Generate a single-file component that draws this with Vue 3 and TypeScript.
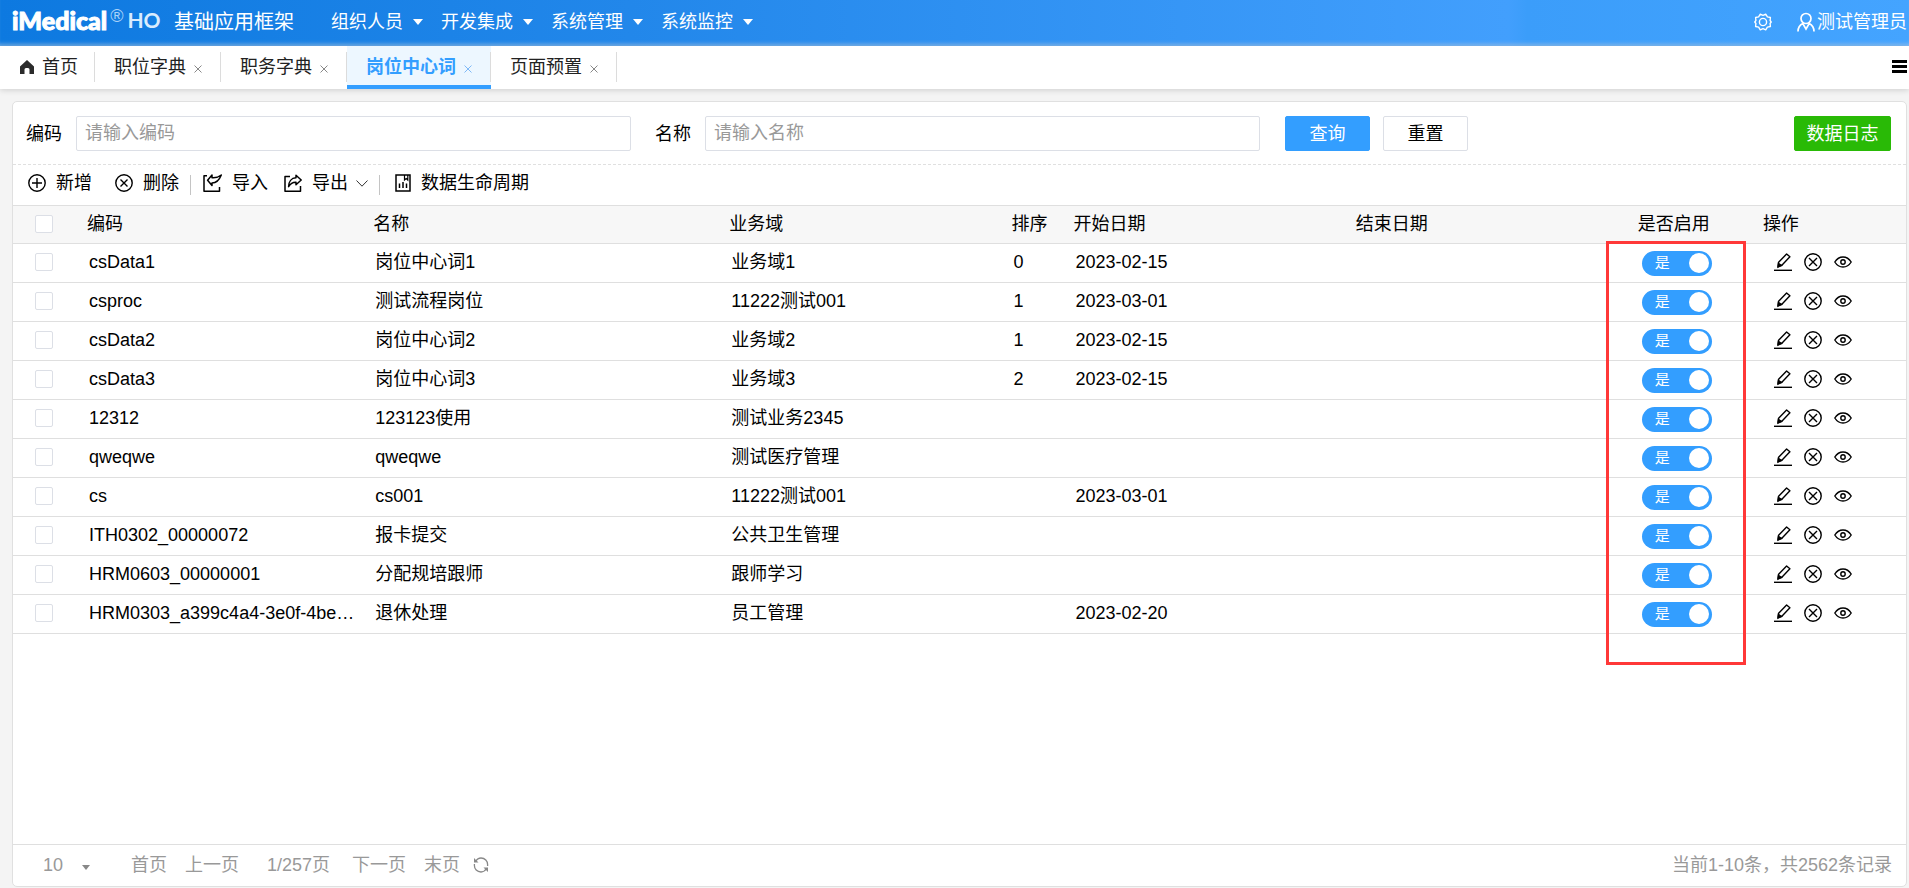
<script setup lang="ts">
import { ref } from 'vue'

interface Row {
  code: string
  name: string
  domain: string
  sort: string
  start: string
  end: string
  enabled: boolean
}

const menus: string[] = ['组织人员', '开发集成', '系统管理', '系统监控']
const tabs: string[] = ['职位字典', '职务字典', '岗位中心词', '页面预置']
const activeTab = ref('岗位中心词')
const codeQuery = ref('')
const nameQuery = ref('')

const row = (code: string, name: string, domain: string, sort = '', start = ''): Row => ({
  code, name, domain, sort, start, end: '', enabled: true,
})

const rows = ref<Row[]>([
  row('csData1', '岗位中心词1', '业务域1', '0', '2023-02-15'),
  row('csproc', '测试流程岗位', '11222测试001', '1', '2023-03-01'),
  row('csData2', '岗位中心词2', '业务域2', '1', '2023-02-15'),
  row('csData3', '岗位中心词3', '业务域3', '2', '2023-02-15'),
  row('12312', '123123使用', '测试业务2345'),
  row('qweqwe', 'qweqwe', '测试医疗管理'),
  row('cs', 'cs001', '11222测试001', '', '2023-03-01'),
  row('ITH0302_00000072', '报卡提交', '公共卫生管理'),
  row('HRM0603_00000001', '分配规培跟师', '跟师学习'),
  row('HRM0303_a399c4a4-3e0f-4be…', '退休处理', '员工管理', '', '2023-02-20'),
])
</script>

<template>
  <div class="page">
    <header class="topbar">
      <div class="logo">
        <span class="logo-name">iMedical</span><span class="logo-reg">®</span><span class="logo-ho">HO</span>
      </div>
      <h1 class="product">基础应用框架</h1>
      <nav class="menus">
        <button v-for="m in menus" :key="m" type="button" class="menu">
          {{ m }}
          <svg width="10" height="6" viewBox="0 0 10 6"><path d="M0 0h10L5 6z" fill="#fff" /></svg>
        </button>
      </nav>
      <div class="account">
        <button type="button" class="plain" aria-label="设置">
          <svg width="18" height="18" viewBox="0 0 18 18" fill="none" stroke="#fff" stroke-width="1.4" stroke-linejoin="round">
            <path d="M6.300 1.200 9 2.400l2.700-1.200 1.700 2.700 3 .6-.3 3L17.200 9l-1.100 1.500.3 3-3 .6-1.700 2.700L9 15.600l-2.700 1.200-1.700-2.700-3-.6.3-3L.8 9l1.100-1.500-.3-3 3-.6z" />
            <circle cx="9" cy="9" r="3.600" />
          </svg>
        </button>
        <button type="button" class="plain user">
          <svg width="18" height="20" viewBox="0 0 18 20" fill="none" stroke="#fff" stroke-width="1.700">
            <circle cx="9" cy="6.500" r="5" />
            <path d="M1 19.500c0-4 1.800-6.500 4.800-8l3.200 5.500 3.200-5.500c3 1.500 4.800 4 4.800 8" />
          </svg>
          测试管理员
        </button>
      </div>
    </header>

    <nav class="tabbar">
      <button type="button" class="tab home">
        <svg width="14" height="14" viewBox="0 0 14 14"><path d="M7 0 14 6.500V14H9.500V9.500a1.500 1.500 0 0 0-1.500-1.500H6A1.500 1.500 0 0 0 4.500 9.500V14H0V6.500z" fill="#2b2b2b" /></svg>
        首页
      </button>
      <button
        v-for="t in tabs" :key="t" type="button" class="tab"
        :class="{ active: t === activeTab }" @click="activeTab = t"
      >
        {{ t }}
        <svg class="close" width="8" height="8" viewBox="0 0 8 8"><path d="M.5.5l7 7m0-7l-7 7" fill="none" stroke="currentColor" /></svg>
      </button>
      <button type="button" class="plain more" aria-label="更多">
        <svg width="15" height="13" viewBox="0 0 15 13"><path d="M0 0h15v3H0zM0 5h15v3H0zM0 10h15v3H0z" fill="#000" /></svg>
      </button>
    </nav>

    <main class="panel">
      <form class="search" @submit.prevent>
        <label for="code">编码</label>
        <input id="code" v-model="codeQuery" type="text" placeholder="请输入编码">
        <label for="name" class="second">名称</label>
        <input id="name" v-model="nameQuery" type="text" placeholder="请输入名称">
        <button type="submit" class="btn primary">查询</button>
        <button type="reset" class="btn">重置</button>
        <button type="button" class="btn log">数据日志</button>
      </form>

      <div class="toolbar">
        <button type="button" class="tool">
          <svg width="18" height="18" viewBox="0 0 18 18" fill="none" stroke="#000" stroke-width="1.400"><circle cx="9" cy="9" r="8.200" /><path d="M9 4v10M4 9h10" /></svg>
          新增
        </button>
        <button type="button" class="tool del">
          <svg width="18" height="18" viewBox="0 0 18 18" fill="none" stroke="#000" stroke-width="1.400"><circle cx="9" cy="9" r="8.200" /><path d="M5.500 5.500l7 7m0-7l-7 7" /></svg>
          删除
        </button>
        <i class="sep"></i>
        <button type="button" class="tool">
          <svg width="19" height="18" viewBox="0 0 19 18" fill="none" stroke="#000" stroke-width="1.500" stroke-linejoin="round"><path d="M4 1.700H1v15.500h15.500V13" /><path d="M9 1 4.600 6.300 9 11.500V9c4.500 0 7.500-3.500 9.300-8C15.500 3.200 12.500 4 9 3.700z" /></svg>
          导入
        </button>
        <button type="button" class="tool export">
          <svg width="18" height="18" viewBox="0 0 18 18" fill="none" stroke="#000" stroke-width="1.500" stroke-linejoin="round"><path d="M6 2.500H1v14.700h15.500V12" /><path d="M12 1.200 17.200 6 12 10.800V8.200C8.500 8 6.500 9.500 4.600 12.700 4.600 7.500 7.500 4 12 3.800z" /></svg>
          导出
          <svg class="chev" width="12" height="7" viewBox="0 0 12 7"><path d="M.5.5 6 6.200 11.500.5" fill="none" stroke="#333" /></svg>
        </button>
        <i class="sep"></i>
        <button type="button" class="tool life">
          <svg width="16" height="18" viewBox="0 0 16 18" fill="none" stroke="#000" stroke-width="1.500"><path d="M1 1h14v16H1zM4.500 9.500V14M8 8v6M11.500 9.500V14" /><path d="M9.500 1v5L11.200 4.500 12.800 6V1" stroke-width="1.200" /></svg>
          数据生命周期
        </button>
      </div>

      <div class="grid">
        <table>
          <colgroup>
            <col class="c-check"><col class="c-code"><col class="c-name"><col class="c-mid"><col class="c-sort">
            <col class="c-mid"><col class="c-mid"><col class="c-on"><col class="c-op">
          </colgroup>
          <thead>
            <tr>
              <th class="check"><input type="checkbox" aria-label="全选"></th>
              <th>编码</th><th>名称</th><th>业务域</th><th>排序</th><th>开始日期</th><th>结束日期</th><th>是否启用</th><th>操作</th>
            </tr>
          </thead>
          <tbody>
            <tr v-for="r in rows" :key="r.code">
              <td class="check"><input type="checkbox" :aria-label="r.code"></td>
              <td>{{ r.code }}</td>
              <td>{{ r.name }}</td>
              <td>{{ r.domain }}</td>
              <td>{{ r.sort }}</td>
              <td>{{ r.start }}</td>
              <td>{{ r.end }}</td>
              <td>
                <label class="switch">
                  <input v-model="r.enabled" type="checkbox" aria-label="是否启用">
                  <span>{{ r.enabled ? '是' : '否' }}</span>
                  <i class="knob"></i>
                </label>
              </td>
              <td>
                <div class="ops">
                  <button type="button" class="plain" aria-label="编辑">
                    <svg width="18" height="18" viewBox="0 0 18 18" fill="none" stroke="#000" stroke-width="1.400"><path d="M0 17.300h18" /><path d="M4 13.500l.6-4.300L12.600 1l3.300 2.700-7.800 8.200z" stroke-linejoin="round" /><path d="M4 14l.5-3.500L7.500 12.500z" fill="#000" /></svg>
                  </button>
                  <button type="button" class="plain" aria-label="删除">
                    <svg width="18" height="18" viewBox="0 0 18 18" fill="none" stroke="#000" stroke-width="1.400"><circle cx="9" cy="9" r="8.200" /><path d="M5 5l8 8m0-8l-8 8" /></svg>
                  </button>
                  <button type="button" class="plain" aria-label="查看">
                    <svg width="18" height="18" viewBox="0 0 18 18" fill="none" stroke="#000" stroke-width="1.400"><path d="M.8 9C3 5.500 5.800 4 9 4s6 1.500 8.200 5C15 12.500 12.200 14 9 14S3 12.500.8 9z" /><circle cx="9" cy="9" r="2.200" /></svg>
                  </button>
                </div>
              </td>
            </tr>
          </tbody>
        </table>
        <div class="highlight"></div>
      </div>

      <footer class="pager">
        <label class="size">
          <select aria-label="每页条数"><option>10</option></select>
          <svg width="8" height="5" viewBox="0 0 8 5"><path d="M0 0h8L4 5z" fill="#888" /></svg>
        </label>
        <button type="button" class="plain">首页</button>
        <button type="button" class="plain">上一页</button>
        <span class="current">1/257页</span>
        <button type="button" class="plain">下一页</button>
        <button type="button" class="plain">末页</button>
        <button type="button" class="plain refresh" aria-label="刷新">
          <svg width="16" height="16" viewBox="0 0 16 16" fill="none" stroke="#888" stroke-width="1.300"><path d="M2.500 4.500C4 2 6 1 8 1c4 0 6.600 3 6.600 6.500V9M13.500 11.500C12 14 10 15 8 15c-4 0-6.600-3-6.600-6.500V7" /><path d="M1 1v4.500h4.500zM15 15v-4.500h-4.500z" fill="#888" stroke="none" /></svg>
        </button>
        <span class="total">当前1-10条，共2562条记录</span>
      </footer>
    </main>
  </div>
</template>

<style>
body {
  background: #f4f4f4;
}
</style>

<style scoped>
.page {
  box-sizing: border-box;
  display: flex;
  flex-direction: column;
  min-height: 100vh;
  font-family: "Liberation Sans", "Noto Sans CJK SC", sans-serif;
  font-size: 18px;
  line-height: 24px;
  color: #000;
  background: #f4f4f4;
}
button, input, select {
  font: inherit;
  color: inherit;
  margin: 0;
  white-space: nowrap;
}
svg {
  display: block;
  flex: none;
}
.plain, .menu, .tab, .tool {
  display: flex;
  align-items: center;
  padding: 0;
  border: 0;
  background: none;
}

/* Top bar */
.topbar {
  display: flex;
  align-items: center;
  box-sizing: border-box;
  height: 46px;
  padding: 0 2px 3px 12px;
  color: #fff;
  background: linear-gradient(90deg, #0d79e0 0%, #2287ea 33%, #429ffd 79%, #3b9dfa 80%, #44a4ff 100%);
  box-shadow: inset 0 -5px 4px -3px rgba(190, 215, 240, 0.6);
}
.logo {
  display: flex;
  width: 162px;
  padding-bottom: 3px;
  font-family: Lato, "Liberation Sans", sans-serif;
}
.logo-name {
  font-size: 25px;
  font-weight: 900;
  -webkit-text-stroke: 1px #fff;
}
.logo-reg {
  margin: -3px 4px 0 3px;
  font-family: "Liberation Sans", sans-serif;
  font-size: 18px;
  line-height: 22px;
  color: #a9d2f8;
}
.logo-ho {
  font-size: 21px;
  font-weight: 700;
  color: #d9ecfe;
}
.product {
  margin: 0;
  font-size: 20px;
  font-weight: 400;
}
.menus {
  display: flex;
  gap: 18px;
  margin-left: 37px;
}
.menu {
  gap: 10px;
}
.account {
  display: flex;
  gap: 25px;
  margin-left: auto;
}
.user {
  gap: 2px;
}

/* Tabs */
.tabbar {
  position: relative;
  display: flex;
  height: 43px;
  background: #fff;
  box-shadow: 0 1px 6px rgba(0, 0, 0, 0.16);
}
.tab {
  position: relative;
  gap: 8px;
  padding: 0 19px 2px 19px;
  color: #222;
}
.tab::after {
  content: "";
  position: absolute;
  top: 6px;
  right: 0;
  width: 1px;
  height: 30px;
  background: #dcdcdc;
}
.home {
  gap: 8px;
  padding: 0 17px 2px 20px;
}
.close {
  margin-top: 4px;
  color: #888;
}
.active {
  font-weight: 700;
  color: #339eff;
  background: #edf7ff;
  box-shadow: inset 0 -4px #339eff;
}
.active .close {
  color: #7fb9f7;
}
.more {
  margin: 0 2px 2px auto;
}

/* Content panel */
.panel {
  display: flex;
  flex: 1;
  flex-direction: column;
  margin: 12px 2px 1px 12px;
  border: 1px solid #e0e0e0;
  border-radius: 5px;
  background: #fff;
}
.search {
  display: flex;
  align-items: center;
  padding: 14px 15px 13px 13px;
  border-bottom: 1px dashed #e0e0e0;
}
.search input {
  box-sizing: border-box;
  flex: 1;
  max-width: 555px;
  height: 35px;
  margin-left: 14px;
  padding: 0 8px;
  border: 1px solid #dcdfe6;
  border-radius: 2px;
}
.search input::placeholder {
  color: #999;
}
.second {
  margin-left: 24px;
}
.btn {
  box-sizing: border-box;
  width: 85px;
  height: 35px;
  margin-left: 13px;
  padding: 0;
  border: 1px solid #dcdfe6;
  border-radius: 2px;
  background: #fff;
}
.primary {
  margin-left: 25px;
  color: #fff;
  border-color: #339eff;
  background: #339eff;
}
.log {
  width: 97px;
  margin-left: auto;
  color: #fff;
  border-color: #29ba06;
  background: #29ba06;
}
.toolbar {
  display: flex;
  align-items: center;
  height: 36px;
  padding: 0 15px 4px;
}
.tool {
  gap: 10px;
}
.del {
  margin-left: 23px;
}
.export {
  margin-left: 16px;
}
.life {
  margin-left: 3px;
}
.chev {
  margin-left: -2px;
}
.sep {
  width: 1px;
  height: 20px;
  margin: 3px 12px 0 11px;
  background: #c4c4c4;
}

/* Table */
.grid {
  position: relative;
  flex: 1;
}
table {
  width: 100%;
  table-layout: fixed;
  border-collapse: collapse;
}
.c-check { width: 66px; }
.c-code { width: 286px; }
.c-name { width: 356px; }
.c-mid { width: 282px; }
.c-sort { width: 62px; }
.c-on { width: 125px; }
.c-op { width: 151px; }
th, td {
  box-sizing: border-box;
  height: 39px;
  padding: 0 0 2px 10px;
  overflow: hidden;
  text-align: left;
  white-space: nowrap;
  border-bottom: 1px solid #dfdfdf;
}
th {
  height: 38px;
  padding-left: 8px;
  font-weight: 400;
  border-top: 1px solid #dfdfdf;
  background: #f7f7f7;
}
.check {
  padding-left: 22px;
}
.check input {
  display: block;
  appearance: none;
  width: 18px;
  height: 18px;
  border: 1px solid #dcdfe6;
  border-radius: 2px;
  background: #fff;
}
.switch {
  display: flex;
  align-items: center;
  justify-content: space-between;
  box-sizing: border-box;
  width: 70px;
  height: 25px;
  margin: 2px 0 0 2px;
  padding: 0 3px 0 13px;
  border-radius: 13px;
  font-size: 15px;
  color: #fff;
  background: #339eff;
}
.switch input {
  position: absolute;
  opacity: 0;
}
.knob {
  width: 20px;
  height: 20px;
  border-radius: 50%;
  background: #fff;
}
.ops {
  display: flex;
  gap: 12px;
  padding-left: 9px;
}
.highlight {
  position: absolute;
  top: 36px;
  right: 160px;
  box-sizing: border-box;
  width: 140px;
  height: 424px;
  border: 3px solid #ff3838;
  pointer-events: none;
}

/* Pager */
.pager {
  display: flex;
  align-items: center;
  gap: 18px;
  height: 39px;
  padding: 0 14px 2px 30px;
  border-top: 1px solid #dfdfdf;
  color: #999;
}
.size {
  display: flex;
  align-items: center;
  width: 70px;
  gap: 18px;
}
.size svg {
  margin-top: 6px;
}
.size select {
  appearance: none;
  padding: 0;
  border: 0;
  background: none;
}
.current {
  margin: 0 4px 0 10px;
}
.refresh {
  margin-left: -5px;
}
.total {
  margin-left: auto;
}
</style>
